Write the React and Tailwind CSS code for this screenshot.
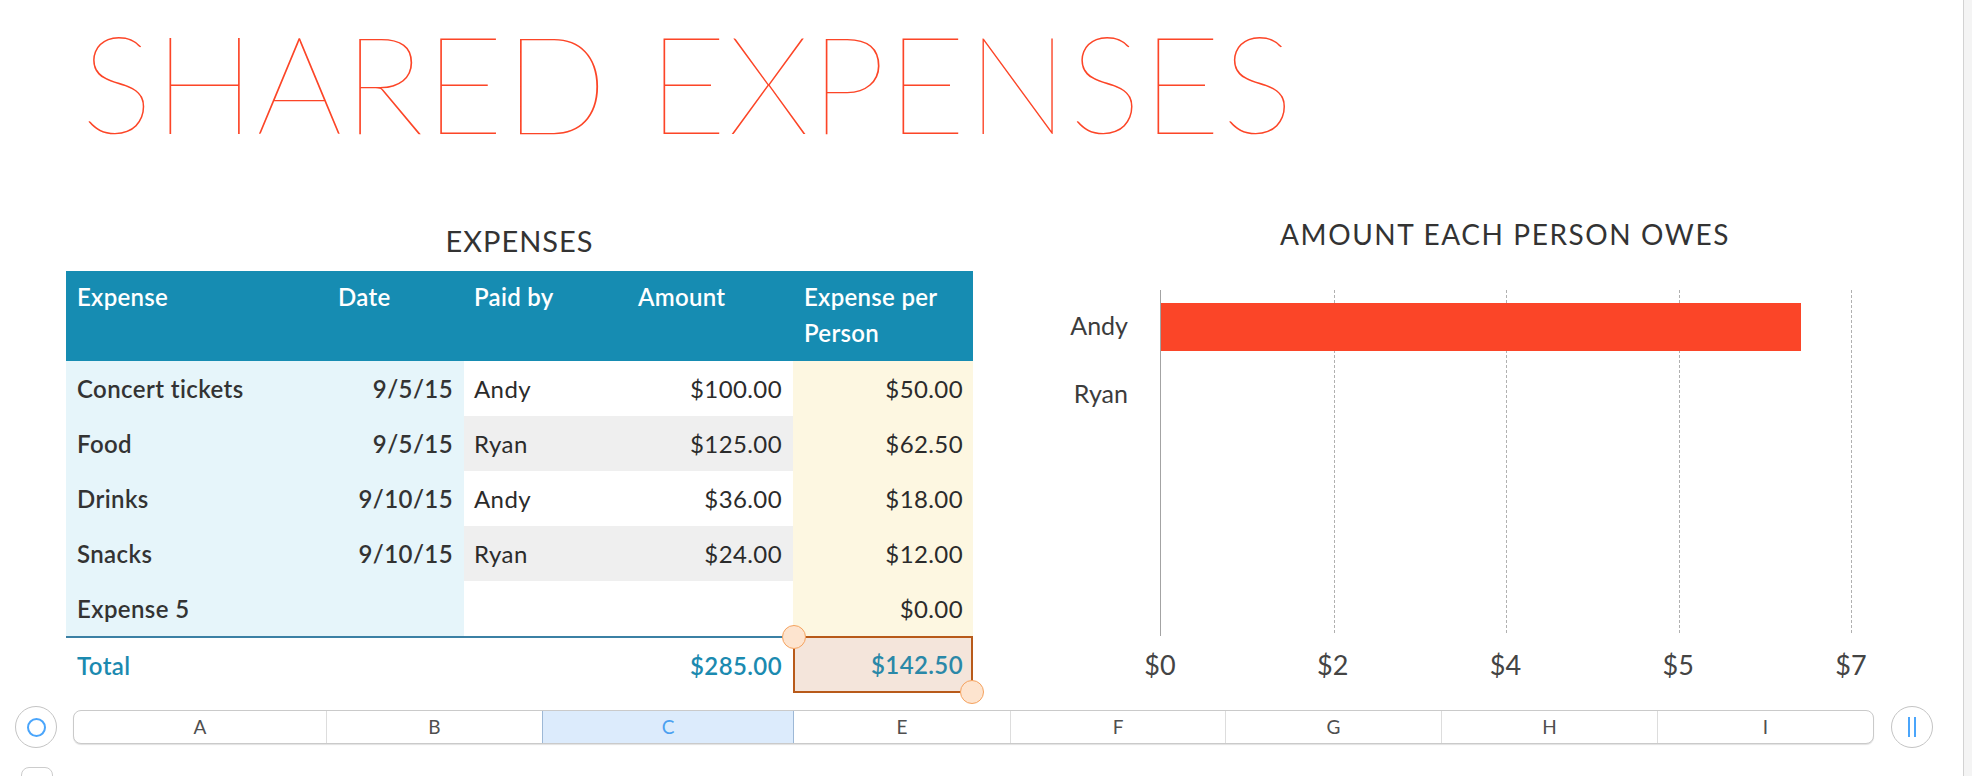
import React from "react";

const rows = [
  { name: "Concert tickets", date: "9/5/15", paid: "Andy", amount: "$100.00", per: "$50.00", shade: false },
  { name: "Food", date: "9/5/15", paid: "Ryan", amount: "$125.00", per: "$62.50", shade: true },
  { name: "Drinks", date: "9/10/15", paid: "Andy", amount: "$36.00", per: "$18.00", shade: false },
  { name: "Snacks", date: "9/10/15", paid: "Ryan", amount: "$24.00", per: "$12.00", shade: true },
  { name: "Expense 5", date: "", paid: "", amount: "", per: "$0.00", shade: false },
];

const ticks = [
  { label: "$0", left: "0%" },
  { label: "$2", left: "25%" },
  { label: "$4", left: "50%" },
  { label: "$5", left: "75%" },
  { label: "$7", left: "100%" },
];

const columns = [
  { id: "A", w: "w-[252px]" },
  { id: "B", w: "w-[216px]" },
  { id: "C", w: "w-[252px]", active: true },
  { id: "E", w: "w-[216px]" },
  { id: "F", w: "w-[215px]" },
  { id: "G", w: "w-[216px]" },
  { id: "H", w: "w-[216px]" },
  { id: "I", w: "w-[216px]" },
];

function Handle({ className }) {
  return <span className={`absolute w-[24px] h-[24px] rounded-full bg-[#fde4cf] border border-[#f5a25e] z-20 ${className}`} />;
}

function ExpenseTable() {
  return (
    <section className="w-[907px] ml-[66px]">
      <h2 className="h-[71px] pt-[21px] text-center text-[29px] leading-[40px] tracking-[1px] text-[#333]">EXPENSES</h2>

      <div className="grid grid-cols-[262px_136px_164px_165px_180px] h-[90px] bg-[#168cb2] text-white font-semibold text-[24px] leading-[36px] tracking-[0.3px] pt-[8px]">
        <div className="pl-[11px]">Expense</div>
        <div className="pl-[10px]">Date</div>
        <div className="pl-[10px]">Paid by</div>
        <div className="pl-[10px]">Amount</div>
        <div className="pl-[11px] pr-[10px]">Expense per Person</div>
      </div>

      {rows.map((r) => (
        <div key={r.name} className="grid grid-cols-[262px_136px_164px_165px_180px] h-[55px] text-[24px] tracking-[0.4px] text-[#2b2b2b]">
          <div className="bg-[#e6f5fa] flex items-center pl-[11px] font-semibold text-[#333]">{r.name}</div>
          <div className="bg-[#e6f5fa] flex items-center justify-end pr-[11px] font-semibold text-[#333]">{r.date}</div>
          <div className={`${r.shade ? "bg-[#efefef]" : "bg-white"} flex items-center pl-[10px]`}>{r.paid}</div>
          <div className={`${r.shade ? "bg-[#efefef]" : "bg-white"} flex items-center justify-end pr-[11px]`}>{r.amount}</div>
          <div className="bg-[#fdf7e1] flex items-center justify-end pr-[10px]">{r.per}</div>
        </div>
      ))}

      <div className="grid grid-cols-[262px_136px_164px_165px_180px] h-[57px] text-[24px] tracking-[0.4px] font-semibold text-[#1b8ab0]">
        <div className="border-t-2 border-[#3b80a4] flex items-center pl-[11px]">Total</div>
        <div className="border-t-2 border-[#3b80a4]" />
        <div className="border-t-2 border-[#3b80a4]" />
        <div className="border-t-2 border-[#3b80a4] flex items-center justify-end pr-[11px]">$285.00</div>
        <div className="relative border-2 border-[#b85a1a] bg-[#f4e5db] flex items-center justify-end pr-[8px] text-[#2a88a8]">
          $142.50
          <Handle className="-left-[13px] -top-[13px]" />
          <Handle className="-right-[13px] -bottom-[13px]" />
        </div>
      </div>
    </section>
  );
}

function OwesChart() {
  return (
    <section className="w-[890px] ml-[87px]">
      <h2 className="h-[52px] pt-[16px] text-center text-[28px] leading-[36px] tracking-[1.6px] text-[#333]">AMOUNT EACH PERSON OWES</h2>
      <div className="flex mt-[38px]">
        <div className="w-[68px] flex flex-col items-end text-[25px] leading-[30px] text-[#3c3c3c]">
          <span className="mt-[20px]">Andy</span>
          <span className="mt-[38px]">Ryan</span>
        </div>
        <div className="ml-[32px] w-[691px]">
          <div className="relative h-[346px] border-l border-[#a3a3a3]">
            {ticks.slice(1).map((t) => (
              <div key={t.label} className="absolute top-0 h-[343px] border-l border-dashed border-[#b0b0b0]" style={{ left: t.left }} />
            ))}
            <div className="absolute left-0 top-[13px] h-[48px] bg-[#fb4528]" style={{ width: "92.8%" }} />
          </div>
          <div className="relative h-[36px] mt-[11px] text-[27px] leading-[36px] text-[#444]">
            {ticks.map((t) => (
              <span key={t.label} className="absolute top-0 -translate-x-1/2" style={{ left: t.left }}>{t.label}</span>
            ))}
          </div>
        </div>
      </div>
    </section>
  );
}

function ColumnBar() {
  return (
    <div className="flex items-center mt-[13px] h-[42px]">
      <button className="ml-[15px] w-[42px] h-[42px] rounded-full border border-[#c4c4c4] bg-white flex items-center justify-center">
        <span className="w-[19px] h-[19px] rounded-full border-2 border-[#4aa5fb]" />
      </button>
      <div className="ml-[16px] flex h-[34px] rounded-[8px] border border-[#cacaca] shadow-[0_1px_1px_rgba(0,0,0,0.12)] bg-white overflow-hidden">
        {columns.map((c, i) => (
          <div
            key={c.id}
            className={`${c.w} flex items-center justify-center text-[19px] ${
              c.active ? "bg-[#dcebfc] text-[#4aa0f0] border-x border-[#9db8d6]" : `text-[#4f4f4f] ${i > 0 && !columns[i - 1].active ? "border-l border-[#dddddd]" : ""}`
            }`}
          >
            {c.id}
          </div>
        ))}
      </div>
      <button className="ml-[17px] w-[42px] h-[42px] rounded-full border border-[#c4c4c4] bg-white flex items-center justify-center gap-[4px]">
        <span className="w-[2px] h-[20px] bg-[#4aa5fb]" />
        <span className="w-[2px] h-[20px] bg-[#4aa5fb]" />
      </button>
    </div>
  );
}

export default function App() {
  return (
    <div className="w-[1972px] h-[776px] overflow-hidden bg-white flex font-['Lato',sans-serif]">
      <div className="w-[1963px]">
        <div className="h-[200px]">
          <h1 className="pl-[81px] text-[136px] leading-[1.2] font-extralight text-[#fc4527] tracking-[0.7px] whitespace-nowrap">
            SHARED EXPENSES
          </h1>
        </div>
        <div className="flex">
          <ExpenseTable />
          <OwesChart />
        </div>
        <ColumnBar />
        <div className="ml-[21px] mt-[19px] w-[32px] h-[20px] rounded-t-[8px] border border-[#cccccc]" />
      </div>
      <div className="flex-1 border-l border-[#d2d2d2] bg-[#f4f4f4]" />
    </div>
  );
}
